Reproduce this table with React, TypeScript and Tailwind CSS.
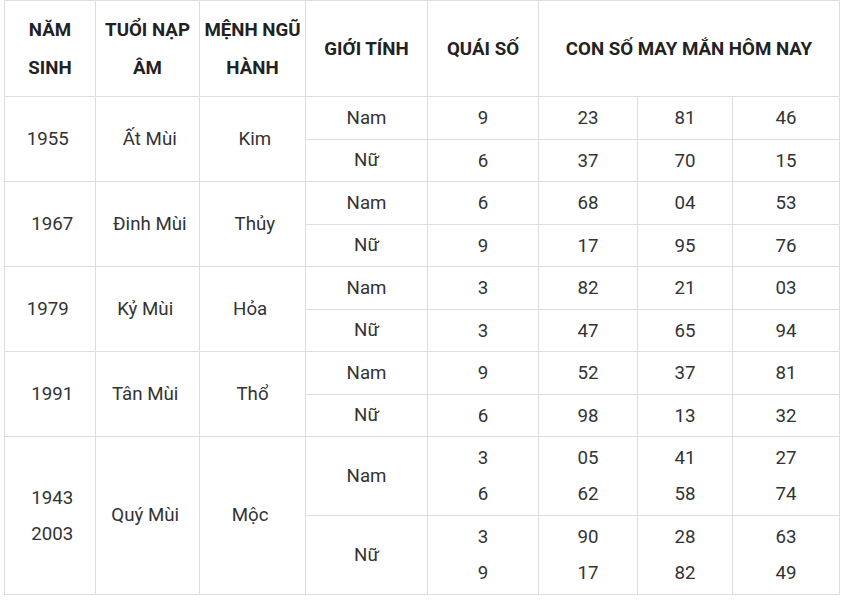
import React from "react";

type Group = {
  year: string[];
  tuoi: string;
  menh: string;
  rows: { gt: string; qs: string[]; n: string[][] }[];
  tall?: boolean;
};

const S = "\u00a0";

const groups: Group[] = [
  {
    year: ["1955" + S],
    tuoi: S + "Ất Mùi",
    menh: S + "Kim",
    rows: [
      { gt: "Nam", qs: ["9"], n: [["23", "81", "46"]] },
      { gt: "Nữ", qs: ["6"], n: [["37", "70", "15"]] },
    ],
  },
  {
    year: [S + "1967"],
    tuoi: S + "Đinh Mùi",
    menh: S + "Thủy",
    rows: [
      { gt: "Nam", qs: ["6"], n: [["68", "04", "53"]] },
      { gt: "Nữ", qs: ["9"], n: [["17", "95", "76"]] },
    ],
  },
  {
    year: ["1979" + S],
    tuoi: "Kỷ Mùi" + S,
    menh: "Hỏa" + S,
    rows: [
      { gt: "Nam", qs: ["3"], n: [["82", "21", "03"]] },
      { gt: "Nữ", qs: ["3"], n: [["47", "65", "94"]] },
    ],
  },
  {
    year: [S + "1991"],
    tuoi: "Tân Mùi" + S,
    menh: "Thổ",
    rows: [
      { gt: "Nam", qs: ["9"], n: [["52", "37", "81"]] },
      { gt: "Nữ", qs: ["6"], n: [["98", "13", "32"]] },
    ],
  },
  {
    year: [S + "1943", S + "2003"],
    tuoi: "Quý Mùi" + S,
    menh: "Mộc" + S,
    tall: true,
    rows: [
      {
        gt: "Nam",
        qs: ["3", "6"],
        n: [
          ["05", "41", "27"],
          ["62", "58", "74"],
        ],
      },
      {
        gt: "Nữ",
        qs: ["3", "9"],
        n: [
          ["90", "28", "63"],
          ["17", "82", "49"],
        ],
      },
    ],
  },
];

const cell = "border border-[#dddddd] text-center align-middle p-0 whitespace-pre";

function Lines({ items }: { items: string[] }) {
  return (
    <>
      {items.map((t, i) => (
        <div key={i} className="leading-[36px]">
          {t}
        </div>
      ))}
    </>
  );
}

export default function App() {
  return (
    <div className="w-[845px] h-[601px] bg-white overflow-hidden">
      <table
        className="ml-[4px] border-collapse table-fixed text-[18.7px] text-[#333333]"
        style={{ fontFamily: "Roboto, 'Noto Sans', sans-serif", width: 835 }}
      >
        <colgroup>
          <col className="w-[91px]" />
          <col className="w-[104px]" />
          <col className="w-[106px]" />
          <col className="w-[122px]" />
          <col className="w-[111px]" />
          <col className="w-[99px]" />
          <col className="w-[95px]" />
          <col className="w-[107px]" />
        </colgroup>
        <thead>
          <tr className="h-[96px] font-bold text-[#222222] leading-[38px]">
            <th className={cell}>
              NĂM
              <br />
              SINH
            </th>
            <th className={cell}>
              TUỔI NẠP
              <br />
              ÂM
            </th>
            <th className={cell}>
              MỆNH NGŨ
              <br />
              HÀNH
            </th>
            <th className={cell}>GIỚI TÍNH</th>
            <th className={cell}>QUÁI SỐ</th>
            <th className={cell} colSpan={3}>
              CON SỐ MAY MẮN HÔM NAY
            </th>
          </tr>
        </thead>
        <tbody>
          {groups.map((g, gi) =>
            g.rows.map((r, ri) => (
              <tr
                key={`${gi}-${ri}`}
                className={g.tall ? "h-[79px]" : ri === 0 ? "h-[43px]" : "h-[42px]"}
              >
                {ri === 0 && (
                  <>
                    <td className={cell} rowSpan={2}>
                      <Lines items={g.year} />
                    </td>
                    <td className={cell} rowSpan={2}>
                      {g.tuoi}
                    </td>
                    <td className={cell} rowSpan={2}>
                      {g.menh}
                    </td>
                  </>
                )}
                <td className={cell}>{r.gt}</td>
                <td className={cell}>
                  <Lines items={r.qs} />
                </td>
                {[0, 1, 2].map((c) => (
                  <td key={c} className={cell}>
                    <Lines items={r.n.map((row) => row[c])} />
                  </td>
                ))}
              </tr>
            ))
          )}
        </tbody>
      </table>
    </div>
  );
}
